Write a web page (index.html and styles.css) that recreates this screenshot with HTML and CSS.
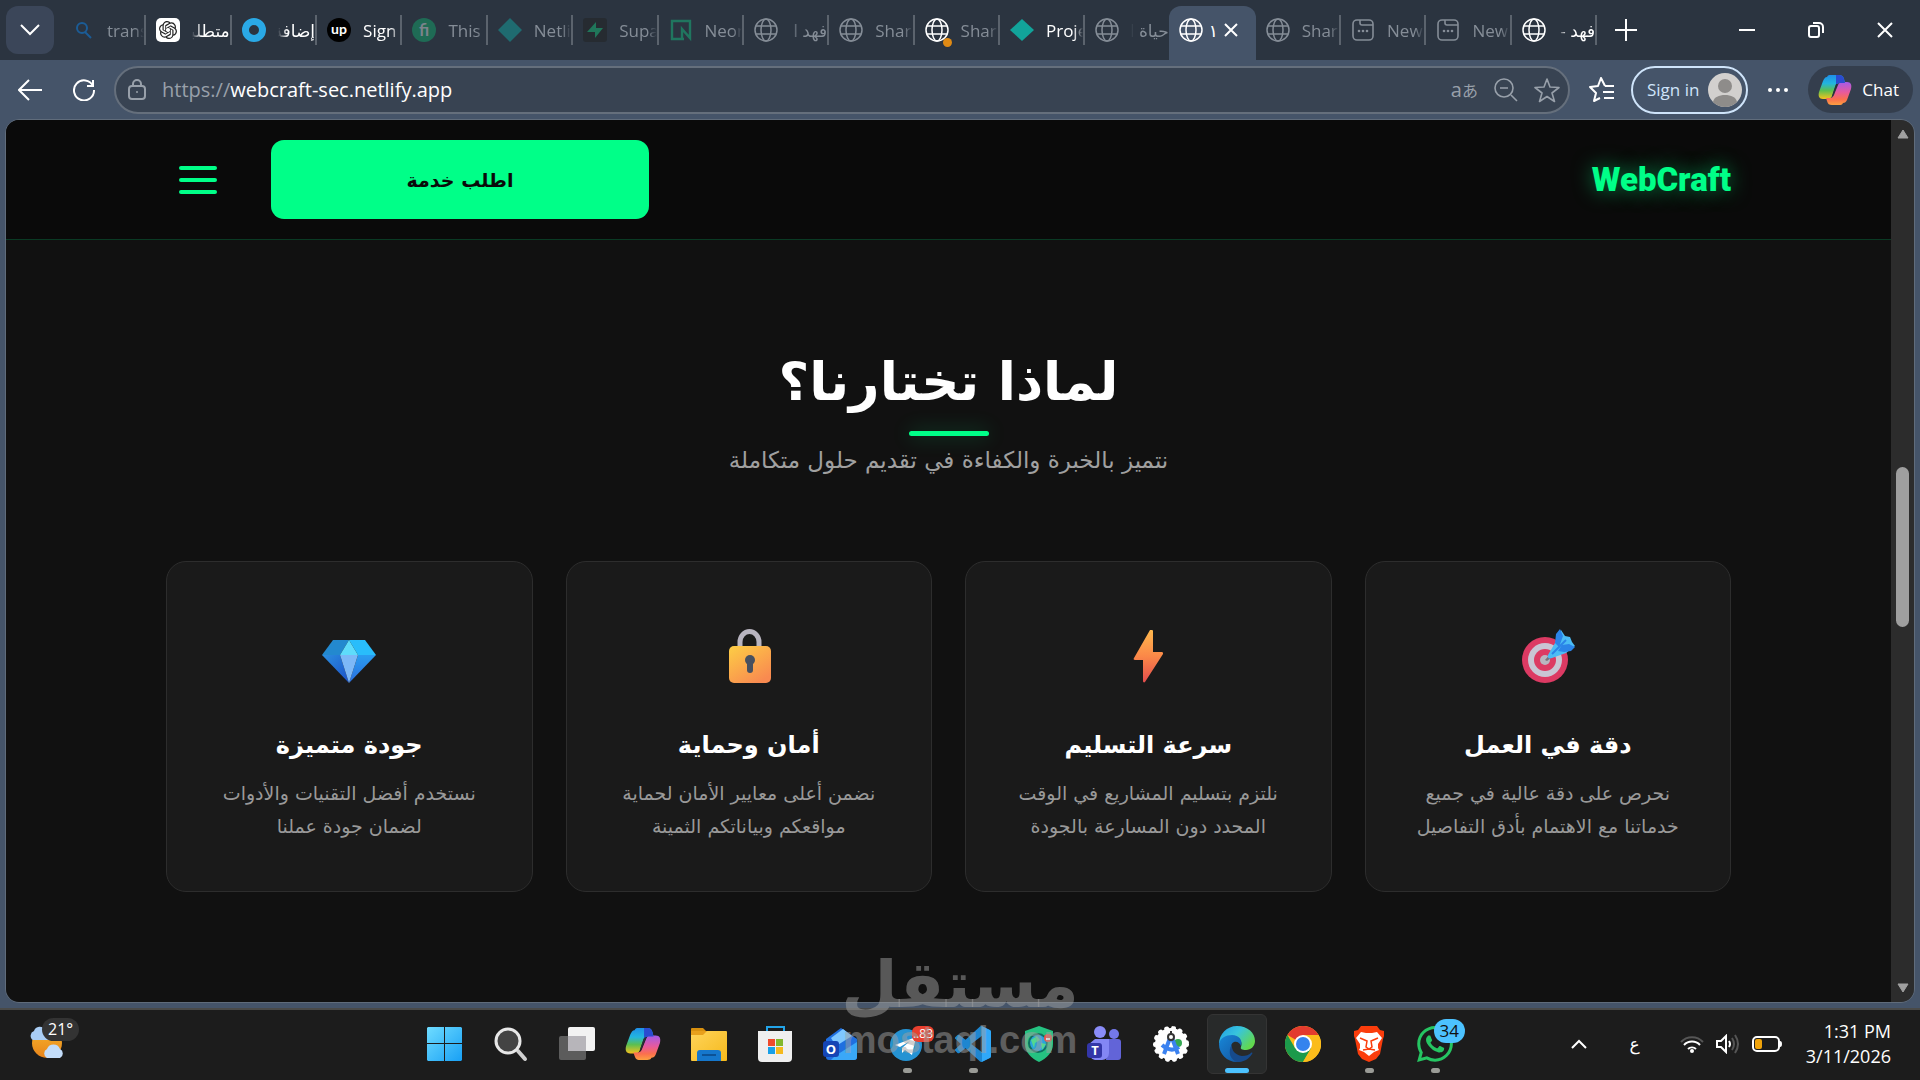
FILE: index.html
```html
<!DOCTYPE html>
<html lang="en">
<head>
  <meta charset="UTF-8">
  <meta name="viewport" content="width=device-width, initial-scale=1.0">
  <title>WebCraft</title>
  <link rel="stylesheet" href="styles.css">
</head>

<body>
  <!-- Shared icon shapes and gradients -->
  <svg class="defs" aria-hidden="true">
    <defs>
      <symbol id="globe" viewBox="0 0 24 24">
        <g fill="none" stroke="currentColor" stroke-width="1.5">
          <circle cx="12" cy="12" r="11"/>
          <ellipse cx="12" cy="12" rx="5" ry="11"/>
          <path d="M2 8h20M2 16h20"/>
        </g>
      </symbol>
      <symbol id="newtab" viewBox="0 0 24 24">
        <g fill="none" stroke="currentColor" stroke-width="1.6">
          <rect x="2" y="2" width="20" height="20" rx="4"/>
          <path d="M9 2v3a2 2 0 0 0 2 2h11"/>
        </g>
        <g fill="currentColor"><circle cx="8" cy="13" r="1.3"/><circle cx="12" cy="13" r="1.3"/><circle cx="16" cy="13" r="1.3"/></g>
      </symbol>
      <symbol id="copilot" viewBox="0 0 34 34">
        <path d="M9 4c1-2 2-2 4-2h8c3 0 4 1 5 4l1 4h-5c-3 0-4 1-5 4l-3 9c-1 2-2 3-5 3H5c-4 0-5-3-4-7L5 8c1-2 2-4 4-4z" fill="url(#copA)"/>
        <path d="M25 30c-1 2-2 2-4 2h-7c-3 0-4-1-5-4l-1-3h4c2 0 3-1 4-3l4-10c1-2 2-3 4-3h5c4 0 5 3 4 7l-4 11c-1 2-2 3-4 3z" fill="url(#copB)"/>
        <path d="M18 2h3c3 0 4 1 5 4l1 4h-5c-2 0-3 1-4 2z" fill="#2b4bd0"/>
        <path d="M20 11l-5 12h-1l4-12z" fill="#2a3038"/>
      </symbol>
      <linearGradient id="copA" x1="0" y1="0" x2="0" y2="1"><stop offset="0" stop-color="#1f8fe8"/><stop offset=".35" stop-color="#22b5e0"/><stop offset=".65" stop-color="#5cbf50"/><stop offset="1" stop-color="#f6c21c"/></linearGradient>
      <linearGradient id="copB" x1="0" y1="0" x2="0" y2="1"><stop offset="0" stop-color="#a45be8"/><stop offset=".45" stop-color="#e85a9c"/><stop offset=".75" stop-color="#fb6f4e"/><stop offset="1" stop-color="#fda040"/></linearGradient>
      <linearGradient id="bolt" x1="0" y1="0" x2="0" y2="1"><stop offset="0" stop-color="#ffb84d"/><stop offset=".5" stop-color="#fb8848"/><stop offset="1" stop-color="#e34d4d"/></linearGradient>
      <linearGradient id="lockBody" x1="0" y1="0" x2=".7" y2="1"><stop offset="0" stop-color="#fdce45"/><stop offset="1" stop-color="#f98a50"/></linearGradient>
      <linearGradient id="gemA" x1="0" y1="0" x2="1" y2="1"><stop offset="0" stop-color="#2c8fe0"/><stop offset="1" stop-color="#1b50c8"/></linearGradient>
      <linearGradient id="gemB" x1="0" y1="0" x2="0" y2="1"><stop offset="0" stop-color="#2a9df0"/><stop offset="1" stop-color="#2a6ee0"/></linearGradient>
      <linearGradient id="win" x1="0" y1="0" x2="1" y2="1"><stop offset="0" stop-color="#6fdcff"/><stop offset="1" stop-color="#18a0f5"/></linearGradient>
      <linearGradient id="edgeTop" x1="0" y1="0" x2="1" y2=".6"><stop offset="0" stop-color="#1f9de8"/><stop offset=".5" stop-color="#38c5dc"/><stop offset="1" stop-color="#62d84e"/></linearGradient>
      <linearGradient id="edgeLow" x1="0" y1="0" x2="1" y2="1"><stop offset="0" stop-color="#1787d8"/><stop offset="1" stop-color="#14509a"/></linearGradient>
      <linearGradient id="folder" x1="0" y1="0" x2="1" y2="1"><stop offset="0" stop-color="#ffd45a"/><stop offset="1" stop-color="#f5b91c"/></linearGradient>
      <linearGradient id="sun" x1="0" y1="0" x2="0" y2="1"><stop offset="0" stop-color="#f6b52c"/><stop offset="1" stop-color="#e8831a"/></linearGradient>
    </defs>
  </svg>

  <!-- Tab strip -->
  <header class="tab-bar">
    <button class="tab-search" aria-label="Search tabs"><svg width="20" height="12" viewBox="0 0 20 12"><path d="M1 1l9 9 9-9" fill="none" stroke="currentColor" stroke-width="2"/></svg></button>
    <nav class="tabs">
      <a href="#" class="tab dim">
        <svg class="tab-icon" viewBox="0 0 24 24"><circle cx="11" cy="10" r="5" fill="none" stroke="#1b5c96" stroke-width="2"/><path d="M14 14l6 6" stroke="#1b5c96" stroke-width="2"/></svg>
        <span class="tab-title">trans</span>
      </a>
      <a href="#" class="tab">
        <svg class="tab-icon" viewBox="0 0 24 24"><rect width="24" height="24" rx="5" fill="#fff"/><g transform="translate(3 3) scale(.75)"><path fill="#222" d="M22.2819 9.8211a5.9847 5.9847 0 0 0-.5157-4.9108 6.0462 6.0462 0 0 0-6.5098-2.9A6.0651 6.0651 0 0 0 4.9807 4.1818a5.9847 5.9847 0 0 0-3.9977 2.9 6.0462 6.0462 0 0 0 .7427 7.0966 5.98 5.98 0 0 0 .511 4.9107 6.051 6.051 0 0 0 6.5146 2.9001A5.9847 5.9847 0 0 0 13.2599 24a6.0557 6.0557 0 0 0 5.7718-4.2058 5.9894 5.9894 0 0 0 3.9977-2.9001 6.0557 6.0557 0 0 0-.7475-7.0729zm-9.022 12.6081a4.4755 4.4755 0 0 1-2.8764-1.0408l.1419-.0804 4.7783-2.7582a.7948.7948 0 0 0 .3927-.6813v-6.7369l2.02 1.1686a.071.071 0 0 1 .038.0515v5.5826a4.504 4.504 0 0 1-4.4945 4.4944zm-9.6607-4.1254a4.4708 4.4708 0 0 1-.5346-3.0137l.142.0852 4.783 2.7582a.7712.7712 0 0 0 .7806 0l5.8428-3.3685v2.3324a.0804.0804 0 0 1-.0332.0615L9.74 19.9502a4.4992 4.4992 0 0 1-6.1408-1.6464zM2.3408 7.8956a4.485 4.485 0 0 1 2.3655-1.9728V11.6a.7664.7664 0 0 0 .3879.6765l5.8144 3.3543-2.0201 1.1685a.0757.0757 0 0 1-.071 0l-4.8303-2.7865A4.504 4.504 0 0 1 2.3408 7.872zm16.5963 3.8558L13.1038 8.364 15.1192 7.2a.0757.0757 0 0 1 .071 0l4.8303 2.7913a4.4944 4.4944 0 0 1-.6765 8.1042v-5.6772a.79.79 0 0 0-.407-.667zm2.0107-3.0231l-.142-.0852-4.7735-2.7818a.7759.7759 0 0 0-.7854 0L9.409 9.2297V6.8974a.0662.0662 0 0 1 .0284-.0615l4.8303-2.7866a4.4992 4.4992 0 0 1 6.6802 4.66zM8.3065 12.863l-2.02-1.1638a.0804.0804 0 0 1-.038-.0567V6.0742a4.4992 4.4992 0 0 1 7.3757-3.4537l-.142.0805L8.704 5.459a.7948.7948 0 0 0-.3927.6813zm1.0976-2.3654l2.602-1.4998 2.6069 1.4998v2.9994l-2.5974 1.4997-2.6067-1.4997Z"/></g></svg>
        <span class="tab-title" dir="rtl">متطلبات</span>
      </a>
      <a href="#" class="tab">
        <svg class="tab-icon" viewBox="0 0 24 24"><circle cx="12" cy="12" r="8.5" fill="none" stroke="#2aa9e6" stroke-width="7"/></svg>
        <span class="tab-title" dir="rtl">إضافة</span>
      </a>
      <a href="#" class="tab">
        <svg class="tab-icon" viewBox="0 0 24 24"><circle cx="12" cy="12" r="12" fill="#000"/><text x="12" y="16" text-anchor="middle" class="up-text">up</text></svg>
        <span class="tab-title">Sign</span>
      </a>
      <a href="#" class="tab dim">
        <svg class="tab-icon" viewBox="0 0 24 24"><circle cx="12" cy="12" r="12" fill="#1f6b55"/><text x="12" y="18" text-anchor="middle" class="fi-text">fi</text></svg>
        <span class="tab-title">This</span>
      </a>
      <a href="#" class="tab dim">
        <svg class="tab-icon" viewBox="0 0 24 24"><path d="M12 0l12 12-12 12L0 12z" fill="#1f6b70"/></svg>
        <span class="tab-title">Netli</span>
      </a>
      <a href="#" class="tab dim">
        <svg class="tab-icon" viewBox="0 0 24 24"><rect width="24" height="24" rx="3" fill="#262b31"/><path d="M13 4l-9 10h8v6l8-10h-7z" fill="#20765a"/></svg>
        <span class="tab-title">Supa</span>
      </a>
      <a href="#" class="tab dim">
        <svg class="tab-icon" viewBox="0 0 24 24"><path d="M15 21H3V3h18v17l-8-9v10" fill="none" stroke="#20765f" stroke-width="2.4"/></svg>
        <span class="tab-title">Neon</span>
      </a>
      <a href="#" class="tab dim">
        <svg class="tab-icon"><use href="#globe"/></svg>
        <span class="tab-title" dir="rtl">فهد ا</span>
      </a>
      <a href="#" class="tab dim">
        <svg class="tab-icon"><use href="#globe"/></svg>
        <span class="tab-title">Share</span>
      </a>
      <a href="#" class="tab dim">
        <svg class="tab-icon bright"><use href="#globe"/></svg>
        <span class="tab-dot"></span>
        <span class="tab-title">Share</span>
      </a>
      <a href="#" class="tab">
        <svg class="tab-icon" viewBox="0 0 24 24"><path d="M12 1l12 11-12 11L0 12z" fill="#12a39a"/></svg>
        <span class="tab-title">Proje</span>
      </a>
      <a href="#" class="tab dim last">
        <svg class="tab-icon"><use href="#globe"/></svg>
        <span class="tab-title" dir="rtl">حياة ا</span>
      </a>
      <a href="#" class="tab active">
        <svg class="tab-icon"><use href="#globe"/></svg>
        <span class="tab-title short">١</span>
        <svg class="tab-close" width="14" height="14" viewBox="0 0 14 14"><path d="M1 1l12 12M13 1L1 13" stroke="currentColor" stroke-width="2"/></svg>
      </a>
      <a href="#" class="tab dim">
        <svg class="tab-icon"><use href="#globe"/></svg>
        <span class="tab-title">Share</span>
      </a>
      <a href="#" class="tab dim">
        <svg class="tab-icon"><use href="#newtab"/></svg>
        <span class="tab-title">New</span>
      </a>
      <a href="#" class="tab dim">
        <svg class="tab-icon"><use href="#newtab"/></svg>
        <span class="tab-title">New</span>
      </a>
      <a href="#" class="tab">
        <svg class="tab-icon"><use href="#globe"/></svg>
        <span class="tab-title" dir="rtl">فهد -</span>
      </a>
    </nav>
    <button class="icon-btn new-tab" aria-label="New tab"><svg width="22" height="22" viewBox="0 0 22 22"><path d="M11 0v22M0 11h22" stroke="currentColor" stroke-width="2"/></svg></button>
    <div class="window-controls">
      <button class="icon-btn" aria-label="Minimize"><svg width="16" height="16" viewBox="0 0 16 16"><path d="M0 8h16" stroke="currentColor" stroke-width="2"/></svg></button>
      <button class="icon-btn" aria-label="Restore"><svg width="16" height="16" viewBox="0 0 16 16" fill="none" stroke="currentColor" stroke-width="2"><rect x="1" y="4" width="10" height="11" rx="2"/><path d="M5 1h6a4 4 0 0 1 4 4v6"/></svg></button>
      <button class="icon-btn" aria-label="Close"><svg width="16" height="16" viewBox="0 0 16 16"><path d="M1 1l14 14M15 1L1 15" stroke="currentColor" stroke-width="2"/></svg></button>
    </div>
  </header>

  <!-- Toolbar -->
  <div class="toolbar">
    <button class="icon-btn back" aria-label="Back"><svg width="24" height="22" viewBox="0 0 24 22" fill="none" stroke="currentColor" stroke-width="2"><path d="M24 11H1M11 1L1 11l10 10"/></svg></button>
    <button class="icon-btn reload" aria-label="Refresh"><svg width="22" height="22" viewBox="0 0 22 22" fill="none" stroke="currentColor" stroke-width="2"><path d="M20 7A10 10 0 1 0 21 11M20 1v6h-6"/></svg></button>
    <form class="address-bar">
      <svg class="muted" width="18" height="22" viewBox="0 0 18 22" fill="none" stroke="currentColor" stroke-width="2"><rect x="1" y="7" width="16" height="13" rx="3"/><path d="M5 7V5a4 4 0 0 1 8 0v2"/><circle cx="9" cy="13" r="1" fill="currentColor" stroke="none"/></svg>
      <label class="scheme" for="url">https://</label>
      <input id="url" class="url" type="text" value="webcraft-sec.netlify.app">
      <button type="button" class="translate" aria-label="Translate">a<span>あ</span></button>
      <button type="button" class="icon-btn muted" aria-label="Zoom out"><svg width="24" height="24" viewBox="0 0 24 24" fill="none" stroke="currentColor" stroke-width="1.6"><circle cx="10" cy="10" r="9"/><path d="M17 17l6 6M6 10h8"/></svg></button>
      <button type="button" class="icon-btn muted" aria-label="Add to favorites"><svg width="26" height="26" viewBox="0 0 26 26" fill="none" stroke="currentColor" stroke-width="1.6" stroke-linejoin="round"><path d="M13 2l3 8 9 .5-7 5.5 2.500 8.500L13 19.500 5.500 24.500 8 16 1 10.500l9-.5z"/></svg></button>
    </form>
    <button class="icon-btn favorites" aria-label="Favorites"><svg width="26" height="26" viewBox="0 0 26 26" fill="none" stroke="currentColor" stroke-width="2" stroke-linejoin="round"><path d="M16 9L12 1 9 9l-8 1 6 6-2 8 6-3M16 9h9M14 15h11M15 21h10"/></svg></button>
    <button class="sign-in">Sign in
      <svg width="34" height="34" viewBox="0 0 34 34"><circle cx="17" cy="17" r="17" fill="#d2d0ce"/><circle cx="17" cy="13" r="7" fill="#8e8c8a"/><path d="M5 29c1-5 6-7 12-7s11 2 12 7a17 17 0 0 1-24 0z" fill="#8e8c8a"/></svg>
    </button>
    <button class="icon-btn" aria-label="Settings and more"><svg width="20" height="4" viewBox="0 0 20 4" fill="currentColor"><circle cx="2" cy="2" r="2"/><circle cx="10" cy="2" r="2"/><circle cx="18" cy="2" r="2"/></svg></button>
    <button class="chat"><svg width="34" height="34"><use href="#copilot"/></svg>Chat</button>
  </div>

  <!-- Page -->
  <div class="browser-frame">
    <div class="page" dir="rtl" lang="ar">
      <header class="site-header">
        <a href="#" class="logo">WebCraft</a>
        <div class="header-actions">
          <button class="order-btn">اطلب خدمة</button>
          <button class="menu-toggle" aria-label="القائمة"><span></span><span></span><span></span></button>
        </div>
      </header>

      <main class="features">
        <h2 class="section-title">لماذا تختارنا؟</h2>
        <p class="section-subtitle">نتميز بالخبرة والكفاءة في تقديم حلول متكاملة</p>

        <div class="features-grid">
          <div class="feature-card">
            <svg class="feature-icon" viewBox="0 0 56 56">
              <circle cx="25" cy="32" r="23" fill="#dc3a63"/><circle cx="25" cy="32" r="17" fill="#c9c5d4"/><circle cx="25" cy="32" r="11" fill="#dc3a63"/><circle cx="25" cy="32" r="5" fill="#b9b6c0"/>
              <path d="M25 32l7-8 3 3-8 6z" fill="#74747c"/>
              <path d="M28 27l7-12 6-13 4 6 5 1 2 5 3 4-9 7-14 5c-3 1-5 0-4-3z" fill="#4bbcf5"/>
              <path d="M35 15l1-9 4-5 3 7-4 11zM42 17l7-1 6 3-4 4-7 1-6-1z" fill="#2b84e8"/>
              <path d="M32 26L46 12" stroke="#2b84e8" stroke-width="2"/>
            </svg>
            <h3>دقة في العمل</h3>
            <p>نحرص على دقة عالية في جميع<br>خدماتنا مع الاهتمام بأدق التفاصيل</p>
          </div>
          <div class="feature-card">
            <svg class="feature-icon" viewBox="0 0 56 56"><path d="M30 2h2c1 0 1 1 1 1v21h9c1 0 1 1 1 2L25 54c-1 1-2 0-2-1V32h-8c-1 0-2-1-1-2z" fill="url(#bolt)"/></svg>
            <h3>سرعة التسليم</h3>
            <p>نلتزم بتسليم المشاريع في الوقت<br>المحدد دون المسارعة بالجودة</p>
          </div>
          <div class="feature-card">
            <svg class="feature-icon" viewBox="0 0 56 56">
              <path d="M19 22V14a9.500 10.500 0 0 1 19 0v8" fill="none" stroke="#b8b4bf" stroke-width="5"/>
              <rect x="8" y="18" width="42" height="37" rx="5" fill="url(#lockBody)"/>
              <circle cx="29" cy="32" r="5" fill="#47505f"/><rect x="26" y="33" width="6" height="12" rx="3" fill="#47505f"/>
            </svg>
            <h3>أمان وحماية</h3>
            <p>نضمن أعلى معايير الأمان لحماية<br>مواقعكم وبياناتكم الثمينة</p>
          </div>
          <div class="feature-card">
            <svg class="feature-icon" viewBox="0 0 56 56">
              <path d="M12 12h16L19 27H1z" fill="#2389cf"/><path d="M28 12h16l11 15H37z" fill="#29bdfb"/>
              <path d="M28 12l9 15H19z" fill="#5fdcfb"/><path d="M1 27h18l9 28z" fill="url(#gemA)"/>
              <path d="M55 27H37l-9 28z" fill="url(#gemB)"/><path d="M19 27h18l-9 28z" fill="#7db8f7"/>
            </svg>
            <h3>جودة متميزة</h3>
            <p>نستخدم أفضل التقنيات والأدوات<br>لضمان جودة عملنا</p>
          </div>
        </div>
      </main>
    </div>

    <div class="scrollbar">
      <svg width="12" height="10" viewBox="0 0 12 10"><path d="M6 1l5 8H1z" fill="#a0a0a0" stroke="#a0a0a0" stroke-linejoin="round"/></svg>
      <div class="scroll-thumb"></div>
      <svg width="12" height="10" viewBox="0 0 12 10"><path d="M6 9l5-8H1z" fill="#a0a0a0" stroke="#a0a0a0" stroke-linejoin="round"/></svg>
    </div>
  </div>

  <!-- Taskbar -->
  <footer class="taskbar">
    <button class="weather" aria-label="Weather">
      <svg width="36" height="36" viewBox="0 0 36 36"><circle cx="18" cy="19" r="15" fill="url(#sun)"/><path d="M4 16a5 5 0 0 1 1-9 6 6 0 0 1 11-1l4 3v7z" fill="#a9cdf5"/><path d="M18 34a5 5 0 0 1 0-9 7 7 0 0 1 13 0 5 5 0 0 1 0 9z" fill="#c3ddfa"/></svg>
      <span class="weather-temp">21°</span>
    </button>

    <div class="apps">
      <button class="app" aria-label="Start"><svg width="36" height="36" viewBox="0 0 36 36"><path d="M1 1h16v16H0V2zM18 1h16l1 1v15H18zM0 18h17v17H1l-1-1zM18 18h17v16l-1 1H18z" fill="url(#win)"/></svg></button>
      <button class="app" aria-label="Search"><svg width="36" height="36" viewBox="0 0 36 36"><path d="M25 25l7 8" stroke="#d0d0d0" stroke-width="4" stroke-linecap="round"/><circle cx="15" cy="15" r="12" fill="#444" stroke="#e8e8e8" stroke-width="3"/></svg></button>
      <button class="app" aria-label="Task view"><svg width="36" height="36" viewBox="0 0 36 36"><rect x="9" y="1" width="27" height="24" rx="2" fill="#f2f2f2"/><rect x="0" y="10" width="27" height="24" rx="2" fill="#777" fill-opacity=".7"/><path d="M9 10h18v15H9z" fill="#b7b5ba"/></svg></button>
      <button class="app" aria-label="Copilot"><svg width="36" height="36"><use href="#copilot"/></svg></button>
      <button class="app" aria-label="File Explorer"><svg width="36" height="36" viewBox="0 0 36 36"><path d="M0 3a1 1 0 0 1 1-1h11l4 4H0z" fill="#d8900f"/><rect x="0" y="5" width="36" height="30" rx="1" fill="url(#folder)"/><path d="M0 5h16l-4 4H0z" fill="#e8a01c"/><path d="M6 35V27a3 3 0 0 1 3-3h18a3 3 0 0 1 3 3v8z" fill="#1577cc"/><path d="M11 29h14" stroke="#0c5296" stroke-width="2"/></svg></button>
      <button class="app" aria-label="Microsoft Store"><svg width="36" height="36" viewBox="0 0 36 36"><path d="M10 6V1h17v5" fill="none" stroke="#22a4e8" stroke-width="2"/><path d="M1 5h34v27a4 4 0 0 1-4 4H5a4 4 0 0 1-4-4z" fill="#efefef"/><path d="M11 13h7v7h-7z" fill="#ef4a2c"/><path d="M19 13h7v7h-7z" fill="#82b82c"/><path d="M11 21h7v7h-7z" fill="#18a0e8"/><path d="M19 21h7v7h-7z" fill="#f5b91c"/></svg></button>
      <button class="app" aria-label="Outlook"><svg width="36" height="36" viewBox="0 0 36 36"><path d="M3 13L18 2l16 11v18a3 3 0 0 1-3 3H6a3 3 0 0 1-3-3z" fill="#1f6fe0"/><path d="M8 12L20 3l9 7-16 10z" fill="#7fc8ff"/><path d="M12 30l22-14v15a3 3 0 0 1-3 3H8z" fill="#3aa8f8"/><rect x="0" y="15" width="16" height="16" rx="3" fill="#1545b5"/><text x="8" y="28" text-anchor="middle" class="letter">O</text></svg></button>
      <button class="app running" aria-label="Telegram"><svg width="36" height="36" viewBox="0 0 36 36"><circle cx="17" cy="19" r="16" fill="#2593d3"/><path d="M6 19l21-8-4 18-7-5-3 3v-5l8-7-10 6z" fill="#fff"/></svg><span class="badge red">..83</span></button>
      <button class="app running" aria-label="Visual Studio Code"><svg width="36" height="36" viewBox="0 0 24 24"><path fill="#1e86d0" d="M23.150 2.587L18.210.210a1.494 1.494 0 0 0-1.705.290l-9.460 8.630-4.120-3.128a.999.999 0 0 0-1.276.057L.327 7.261A1 1 0 0 0 .326 8.740L3.899 12 .326 15.260a1 1 0 0 0 .001 1.479L1.650 17.940a.999.999 0 0 0 1.276.057l4.120-3.128 9.460 8.630a1.492 1.492 0 0 0 1.704.290l4.942-2.377A1.500 1.500 0 0 0 24 20.060V3.939a1.500 1.500 0 0 0-.850-1.352zm-5.146 14.861L10.826 12l7.178-5.448v10.896z"/><path fill="#30a8f8" d="M18 .2l5.200 2.400q.8.400.8 1.400v16q0 1-.8 1.400L18 23.800z"/></svg></button>
      <button class="app" aria-label="VPN"><svg width="36" height="36" viewBox="0 0 36 36"><path d="M18 0l14 5v13c0 8-6 14-14 18C10 32 4 26 4 18V5z" fill="#25c281"/><circle cx="17" cy="17" r="9" fill="#2aa3dc" stroke="#0f7060" stroke-width="2"/><path d="M10 14l6-4 3 4-5 3-1 5zM20 17l5 1-4 6z" fill="#53d890"/><circle cx="27" cy="12" r="4" fill="#e85548"/><path d="M25 12h4v2h-4z" fill="#fff"/></svg></button>
      <button class="app" aria-label="Teams"><svg width="36" height="36" viewBox="0 0 36 36"><circle cx="13" cy="6" r="6" fill="#8a8cf8"/><circle cx="27" cy="8" r="5" fill="#7478ea"/><path d="M21 13h10a3 3 0 0 1 3 3v15a3 3 0 0 1-3 3H19z" fill="#6264d8"/><path d="M8 13h14v14a7 7 0 0 1-7 7H8a8 8 0 0 1-6-8v-8z" fill="#8386f4"/><rect x="0" y="17" width="15" height="15" rx="3" fill="#3336a8"/><text x="8" y="29" text-anchor="middle" class="letter">T</text></svg></button>
      <button class="app" aria-label="Android Studio"><svg width="36" height="36" viewBox="0 0 36 36"><circle cx="18" cy="18" r="16" fill="#fff"/><circle cx="18" cy="18" r="16" fill="none" stroke="#fff" stroke-width="4" stroke-linecap="round" stroke-dasharray="1 6"/><circle cx="25" cy="17" r="4" fill="#35a853"/><path d="M17 12l-6 16M19 12l6 16M9 19q9 8 17 2" fill="none" stroke="#3b82f0" stroke-width="4"/><circle cx="18" cy="11" r="3" fill="#fff" stroke="#333" stroke-width="2"/><path d="M18 5v3" stroke="#333" stroke-width="2"/></svg></button>
      <button class="app running current" aria-label="Edge"><svg width="36" height="36" viewBox="0 0 36 36"><path d="M18 0c11 0 18 7 18 15 0 5-4 9-9 9-4 0-6-1-5-3 2-6-2-9-7-9C8 12 2 15 0 18 0 8 8 0 18 0z" fill="url(#edgeTop)"/><path d="M0 18C1 12 7 9 13 9c7 0 11 5 9 11-1-3-4-5-7-4-5 2-4 12 3 16 3 2 7 2 9 1-3 2-6 3-9 3C8 36 0 28 0 18z" fill="url(#edgeLow)"/><path d="M13 18c-1 6 3 11 10 12 4 0 7-1 9-3 1-1 2 0 1 1-3 5-8 8-15 8-6-2-10-9-5-18z" fill="#164a8c"/></svg></button>
      <button class="app" aria-label="Chrome"><svg width="36" height="36" viewBox="0 0 36 36"><circle cx="18" cy="18" r="18" fill="#fbbc1b"/><path d="M18 18L2.400 9A18 18 0 0 1 33.600 9H18z" fill="#e33b2e"/><path d="M2.400 9A18 18 0 0 0 18 36l8-13.500-8-4.500L10 22z" fill="#1c9a4b"/><path d="M18 36a18 18 0 0 0 15.600-27H18l8 13.500z" fill="#fbbc1b"/><circle cx="18" cy="18" r="9" fill="#fff"/><circle cx="18" cy="18" r="7" fill="#3583ee"/></svg></button>
      <button class="app running" aria-label="Brave"><svg width="36" height="36" viewBox="0 0 36 36"><path d="M10 0h16l3 4 4 1v5l-1 3-3 15-4 5-7 3-7-3-4-5L4 13l-1-3V5l4-1z" fill="#fb3d0c"/><path d="M10 6l5 1h6l5-1 5 6-4 6v4l1 2-5 2-5 4-5-4-5-2 1-2v-4l-4-6z" fill="#fff"/><path d="M9 12l7 3-1 6 3 2 3-2-1-6 7-3M12 24l6-1 6 1" fill="none" stroke="#fb3d0c" stroke-width="1.500"/></svg></button>
      <button class="app running" aria-label="WhatsApp"><svg width="36" height="36" viewBox="0 0 24 24"><path fill="#25c562" d="M17.472 14.382c-.297-.149-1.758-.867-2.030-.967-.273-.099-.471-.148-.670.150-.197.297-.767.966-.940 1.164-.173.199-.347.223-.644.075-.297-.150-1.255-.463-2.390-1.475-.883-.788-1.480-1.761-1.653-2.059-.173-.297-.018-.458.130-.606.134-.133.298-.347.446-.520.149-.174.198-.298.298-.497.099-.198.050-.371-.025-.520-.075-.149-.669-1.612-.916-2.207-.242-.579-.487-.500-.669-.510-.173-.008-.371-.010-.570-.010-.198 0-.520.074-.792.372-.272.297-1.040 1.016-1.040 2.479 0 1.462 1.065 2.875 1.213 3.074.149.198 2.096 3.200 5.077 4.487.709.306 1.262.489 1.694.625.712.227 1.360.195 1.871.118.571-.085 1.758-.719 2.006-1.413.248-.694.248-1.289.173-1.413-.074-.124-.272-.198-.570-.347m-5.421 7.403h-.004a9.870 9.870 0 01-5.031-1.378l-.361-.214-3.741.982.998-3.648-.235-.374a9.860 9.860 0 01-1.510-5.260c.001-5.450 4.436-9.884 9.888-9.884 2.640 0 5.122 1.030 6.988 2.898a9.825 9.825 0 012.893 6.994c-.003 5.450-4.437 9.884-9.885 9.884m8.413-18.297A11.815 11.815 0 0012.050 0C5.495 0 .160 5.335.157 11.892c0 2.096.547 4.142 1.588 5.945L.057 24l6.305-1.654a11.882 11.882 0 005.683 1.448h.005c6.554 0 11.890-5.335 11.893-11.893a11.821 11.821 0 00-3.480-8.413z"/></svg><span class="badge blue">34</span></button>
    </div>

    <div class="tray">
      <button class="icon-btn" aria-label="Show hidden icons"><svg width="16" height="10" viewBox="0 0 16 10"><path d="M1 9l7-7 7 7" fill="none" stroke="currentColor" stroke-width="2"/></svg></button>
      <button class="lang-btn">ع</button>
      <button class="icon-btn status" aria-label="Network, volume and battery">
        <svg width="24" height="20" viewBox="0 0 24 20" fill="none" stroke="currentColor" stroke-width="2"><path d="M1 8a15 15 0 0 1 22 0" stroke="#555"/><path d="M4 11a11 11 0 0 1 16 0M8 15a6 6 0 0 1 8 0"/><circle cx="12" cy="17" r="2" fill="currentColor" stroke="none"/></svg>
        <svg width="24" height="20" viewBox="0 0 24 20" fill="none" stroke="currentColor" stroke-width="2"><path d="M1 7h4l5-5v16l-5-5H1zM13 7q2 3 0 6"/><path d="M16 4q4 6 0 12M19 1q6 9 0 18" stroke="#555"/></svg>
        <svg width="30" height="16" viewBox="0 0 30 16"><rect x="1" y="1" width="26" height="14" rx="4" fill="none" stroke="currentColor" stroke-width="2"/><path d="M28 5q2 0 2 3t-2 3z" fill="currentColor"/><rect x="3" y="3" width="7" height="10" rx="2" fill="#f0a30a"/></svg>
      </button>
      <button class="clock">1:31 PM<br>3/11/2026</button>
    </div>
  </footer>

  <div class="watermark" aria-hidden="true">
    <span class="watermark-name" lang="ar">مستقل</span>
    <span class="watermark-site">mostaql.com</span>
  </div>
</body>
</html>
```

FILE: styles.css
```css
* {
  box-sizing: border-box;
}

body {
  margin: 0;
  height: 100vh;
  display: flex;
  flex-direction: column;
  position: relative;
  overflow: hidden;
  background-color: #455469;
  color: #fff;
  font-family: 'Open Sans', 'Noto Sans', 'DejaVu Sans', sans-serif;
  font-size: 17px;
}

a {
  color: inherit;
  text-decoration: none;
}

button {
  padding: 0;
  border: none;
  background: none;
  color: inherit;
  font: inherit;
  cursor: pointer;
}

svg {
  display: block;
  flex-shrink: 0;
}

.defs {
  position: absolute;
  width: 0;
  height: 0;
}

.icon-btn {
  display: flex;
  align-items: center;
  justify-content: center;
}

.muted {
  color: #98a0aa;
}

/* Tab strip */
.tab-bar {
  height: 60px;
  display: flex;
  align-items: center;
  background-color: #2b3440;
}

.tab-search {
  width: 48px;
  height: 48px;
  margin: 0 7px 0 6px;
  display: flex;
  align-items: center;
  justify-content: center;
  border-radius: 12px;
  background-color: #3b4659;
}

.tabs {
  width: 80%;
  height: 60px;
  display: flex;
  align-items: center;
}

.tab {
  position: relative;
  flex: 1;
  min-width: 0;
  height: 30px;
  padding-left: 10px;
  display: flex;
  align-items: center;
  gap: 12px;
  border-right: 2px solid #5b636d;
}

.tab.last {
  border-right: none;
}

.tab.dim {
  color: #858d97;
}

.tab-icon {
  width: 24px;
  height: 24px;
}

.tab-icon.bright {
  color: #fff;
}

.tab-title {
  flex: 1;
  overflow: hidden;
  white-space: nowrap;
  mask-image: linear-gradient(to right, #000 75%, transparent);
}

.tab-title[dir="rtl"] {
  mask-image: linear-gradient(to left, #000 75%, transparent);
}

.tab-title.short {
  flex: none;
  mask-image: none;
}

.tab-dot {
  position: absolute;
  left: 28px;
  bottom: -2px;
  width: 9px;
  height: 9px;
  border-radius: 50%;
  background-color: #e08a14;
}

.tab.active {
  flex: 0 0 87px;
  height: 54px;
  align-self: flex-end;
  padding-bottom: 6px;
  gap: 6px;
  border-right: none;
  border-radius: 12px 12px 0 0;
  background-color: #455469;
}

.up-text {
  font: bold 14px 'Lato', sans-serif;
  fill: #fff;
}

.fi-text {
  font: bold 17px 'Lato', sans-serif;
  fill: #7b838d;
}

.new-tab {
  margin-left: 18px;
}

.window-controls {
  flex: 1;
  display: flex;
  justify-content: flex-end;
  gap: 53px;
  padding-right: 27px;
}

/* Toolbar */
.toolbar {
  height: 59px;
  padding: 0 7px 0 18px;
  display: flex;
  align-items: center;
}

.back {
  margin-right: 31px;
}

.reload {
  margin-right: 19px;
}

.address-bar {
  flex: 1;
  min-width: 0;
  height: 48px;
  padding: 0 8px 0 12px;
  display: flex;
  align-items: center;
  gap: 16px;
  border: 2px solid #656f7c;
  border-radius: 24px;
  background-color: #384352;
}

.scheme {
  color: #98a0aa;
  font-size: 20px;
}

.url {
  flex: 1;
  min-width: 0;
  margin-left: -16px;
  padding: 0;
  border: none;
  outline: none;
  background: none;
  color: #fff;
  font: inherit;
  font-size: 20px;
}

.translate {
  color: #98a0aa;
  font-size: 20px;
}

.translate span {
  font-family: 'Noto Sans CJK JP', sans-serif;
  font-size: 16px;
}

.favorites {
  margin: 0 16px 0 19px;
}

.sign-in {
  height: 48px;
  margin-right: 20px;
  padding: 0 4px 0 14px;
  display: flex;
  align-items: center;
  gap: 9px;
  border: 2px solid #cfe4fa;
  border-radius: 24px;
  color: #cfe4fa;
}

.chat {
  height: 47px;
  margin-left: 20px;
  padding: 0 14px 0 10px;
  display: flex;
  align-items: center;
  gap: 10px;
  border-radius: 24px;
  background-color: #343e4d;
}

/* Page */
.browser-frame {
  flex: 1;
  min-height: 0;
  margin: 0 5px;
  display: flex;
  overflow: hidden;
  border: 1px solid #606c7b;
  border-radius: 14px;
}

.page {
  flex: 1;
  min-width: 0;
  background-color: #111;
  font-family: 'DejaVu Sans', sans-serif;
}

.site-header {
  height: 120px;
  padding: 0 160px;
  display: flex;
  align-items: center;
  justify-content: space-between;
  border-bottom: 1px solid #0a3a24;
  background-color: #0a0a0a;
}

.logo {
  color: #00ff88;
  font-family: 'Roboto', sans-serif;
  font-size: 33px;
  font-weight: 900;
  text-shadow: 0 0 20px rgba(0, 255, 136, 0.5);
}

.header-actions {
  display: flex;
  align-items: center;
  gap: 41px;
}

.order-btn {
  width: 378px;
  height: 79px;
  border-radius: 13px;
  background-color: #00ff88;
  color: #0a0a0a;
  font-size: 19px;
  font-weight: bold;
}

.menu-toggle {
  padding: 13px;
  display: flex;
  flex-direction: column;
  gap: 8px;
}

.menu-toggle span {
  width: 38px;
  height: 4px;
  border-radius: 2px;
  background-color: #00ff88;
}

.features {
  padding: 97px 160px 0;
  text-align: center;
}

.section-title {
  margin: 0;
  font-size: 53px;
  line-height: 90px;
  font-weight: bold;
}

.section-title::after {
  content: '';
  display: block;
  width: 80px;
  height: 5px;
  margin: 4px auto 0;
  border-radius: 3px;
  background-color: #00ff88;
  box-shadow: 0 0 20px rgba(0, 255, 136, 0.3);
}

.section-subtitle {
  margin: 4px 0 0;
  color: #a0a0a0;
  font-size: 23px;
  line-height: 40px;
}

.features-grid {
  margin-top: 81px;
  display: grid;
  grid-template-columns: repeat(4, 1fr);
  gap: 33px;
}

.feature-card {
  height: 331px;
  padding-top: 66px;
  border: 1px solid #2d2d2d;
  border-radius: 20px;
  background-color: #1a1a1a;
}

.feature-icon {
  width: 56px;
  height: 56px;
  margin: 0 auto;
}

.feature-card h3 {
  margin: 41px 0 0;
  font-size: 24px;
  line-height: 40px;
}

.feature-card p {
  margin: 12px 0 0;
  color: #999;
  font-size: 19px;
  line-height: 33px;
}

/* Scrollbar */
.scrollbar {
  width: 23px;
  padding: 9px 0;
  display: flex;
  flex-direction: column;
  align-items: center;
  background-color: #2c2c2c;
}

.scrollbar::before,
.scrollbar::after {
  content: '';
}

.scrollbar::before {
  order: 1;
  flex: 12;
}

.scrollbar::after {
  order: 3;
  flex: 13;
}

.scroll-thumb {
  order: 2;
  width: 13px;
  height: 160px;
  border-radius: 7px;
  background-color: #9f9f9f;
}

.scrollbar svg:last-of-type {
  order: 4;
}

/* Taskbar */
.taskbar {
  height: 72px;
  margin-top: 5px;
  padding: 0 29px 2px;
  display: grid;
  grid-template-columns: 1fr auto 1fr;
  align-items: center;
  border-top: 2px solid #4a4a48;
  background-color: #1c1c1c;
}

.weather {
  position: relative;
  justify-self: start;
  margin-bottom: 4px;
}

.weather-temp {
  position: absolute;
  top: -6px;
  left: 13px;
  padding: 0 6px;
  border-radius: 12px;
  background-color: #333;
  font-size: 16px;
  line-height: 23px;
}

.apps {
  padding-right: 40px;
  display: flex;
  gap: 6px;
}

.app {
  position: relative;
  width: 60px;
  height: 60px;
  display: flex;
  align-items: center;
  justify-content: center;
  border-radius: 6px;
}

.app.current {
  border: 1px solid #343434;
  background-color: #282a2a;
}

/* Running indicator under the icon */
.app.running::after {
  content: '';
  position: absolute;
  bottom: 1px;
  width: 9px;
  height: 5px;
  border-radius: 3px;
  background-color: #9a9b96;
}

.app.current::after {
  bottom: 0;
  width: 24px;
  background-color: #4cc2ff;
}

.letter {
  font: bold 13px 'Open Sans', sans-serif;
  fill: #fff;
}

.badge {
  position: absolute;
  top: 5px;
  right: 0;
  border-radius: 12px;
}

.badge.red {
  top: 12px;
  right: 3px;
  padding: 0 1px;
  border-radius: 6px;
  background-color: #e8402f;
  font-size: 12px;
  line-height: 16px;
}

.badge.blue {
  padding: 0 6px;
  background-color: #4cc2ff;
  color: #111;
  line-height: 24px;
}

.tray {
  justify-self: end;
  display: flex;
  align-items: center;
}

.lang-btn {
  margin: 0 40px 0 43px;
  font-family: 'DejaVu Sans', sans-serif;
}

.status {
  gap: 12px;
}

.clock {
  margin-left: 24px;
  font-size: 18px;
  line-height: 25px;
  text-align: right;
}

/* Watermark over the whole screen */
.watermark {
  position: absolute;
  left: 0;
  right: 0;
  bottom: 20px;
  display: flex;
  flex-direction: column;
  align-items: center;
  color: rgba(160, 160, 160, 0.5);
  font-weight: bold;
  pointer-events: none;
}

.watermark-name {
  font-family: 'DejaVu Sans', sans-serif;
  font-size: 65px;
  line-height: 70px;
}

.watermark-site {
  font-family: 'Liberation Sans', sans-serif;
  font-size: 38px;
  line-height: 40px;
}
```
